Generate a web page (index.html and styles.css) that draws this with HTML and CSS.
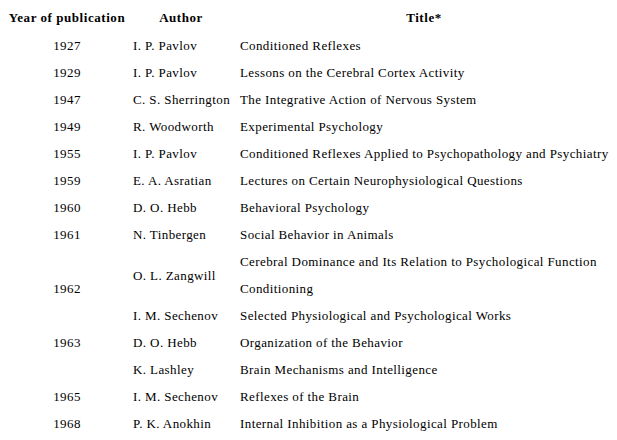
FILE: index.html
```html
<!DOCTYPE html>
<html>
<head>
<meta charset="utf-8">
<link rel="stylesheet" href="styles.css">
</head>
<body>
<table class="pubs">
  <thead>
    <tr>
      <th class="c-year">Year of publication</th>
      <th class="c-author">Author</th>
      <th class="c-title">Title*</th>
    </tr>
  </thead>
  <tbody>
    <tr><td class="c-year">1927</td><td class="c-author">I. P. Pavlov</td><td class="c-title">Conditioned Reflexes</td></tr>
    <tr><td class="c-year">1929</td><td class="c-author">I. P. Pavlov</td><td class="c-title">Lessons on the Cerebral Cortex Activity</td></tr>
    <tr><td class="c-year">1947</td><td class="c-author">C. S. Sherrington</td><td class="c-title">The Integrative Action of Nervous System</td></tr>
    <tr><td class="c-year">1949</td><td class="c-author">R. Woodworth</td><td class="c-title">Experimental Psychology</td></tr>
    <tr><td class="c-year">1955</td><td class="c-author">I. P. Pavlov</td><td class="c-title">Conditioned Reflexes Applied to Psychopathology and Psychiatry</td></tr>
    <tr><td class="c-year">1959</td><td class="c-author">E. A. Asratian</td><td class="c-title">Lectures on Certain Neurophysiological Questions</td></tr>
    <tr><td class="c-year">1960</td><td class="c-author">D. O. Hebb</td><td class="c-title">Behavioral Psychology</td></tr>
    <tr><td class="c-year">1961</td><td class="c-author">N. Tinbergen</td><td class="c-title">Social Behavior in Animals</td></tr>
    <tr><td class="c-year" rowspan="3">1962</td><td class="c-author" rowspan="2">O. L. Zangwill</td><td class="c-title">Cerebral Dominance and Its Relation to Psychological Function</td></tr>
    <tr><td class="c-title">Conditioning</td></tr>
    <tr><td class="c-author">I. M. Sechenov</td><td class="c-title">Selected Physiological and Psychological Works</td></tr>
    <tr><td class="c-year">1963</td><td class="c-author">D. O. Hebb</td><td class="c-title">Organization of the Behavior</td></tr>
    <tr><td class="c-year"></td><td class="c-author">K. Lashley</td><td class="c-title">Brain Mechanisms and Intelligence</td></tr>
    <tr><td class="c-year">1965</td><td class="c-author">I. M. Sechenov</td><td class="c-title">Reflexes of the Brain</td></tr>
    <tr><td class="c-year">1968</td><td class="c-author">P. K. Anokhin</td><td class="c-title">Internal Inhibition as a Physiological Problem</td></tr>
  </tbody>
</table>
</body>
</html>
```
FILE: styles.css
```css
html, body {
  background: #ffffff;
}
body {
  margin: 8px;
  font-family: "Liberation Serif", "Times New Roman", serif;
  font-size: 13px;
  letter-spacing: 0.4px;
  color: #000000;
}
.pubs {
  border-collapse: collapse;
  table-layout: fixed;
  width: 604px;
}
.pubs th,
.pubs td {
  box-sizing: border-box;
  padding: 0;
  vertical-align: middle;
  white-space: nowrap;
}
.pubs th {
  font-weight: bold;
  letter-spacing: 0.55px;
  line-height: 20px;
  padding-bottom: 4px;
  text-align: center;
}
.pubs td {
  line-height: 27px;
}
.c-year {
  width: 118px;
  text-align: center;
}
.c-author {
  width: 110px;
  text-align: left;
}
.pubs td.c-author {
  padding-left: 7px;
}
.c-title {
  text-align: left;
}
.pubs td.c-title {
  padding-left: 4px;
}
```
